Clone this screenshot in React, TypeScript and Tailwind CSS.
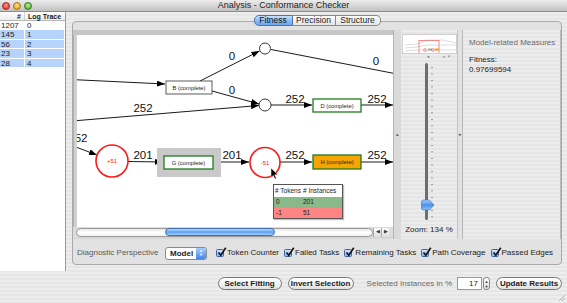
import React from 'react';

const traces = [
  { count: '1207', id: '0', selected: false },
  { count: '145', id: '1', selected: true },
  { count: '56', id: '2', selected: true },
  { count: '23', id: '3', selected: true },
  { count: '28', id: '4', selected: true },
];

const checks = ['Token Counter', 'Failed Tasks', 'Remaining Tasks', 'Path Coverage', 'Passed Edges'];

function TitleBar() {
  return (
    <div className="h-[12px] flex items-center border-b border-[#8c8c8c] bg-gradient-to-b from-[#ececec] to-[#c2c2c2]">
      <div className="w-[40px] flex items-center gap-[3px] pl-[2px]">
        <span className="w-[8px] h-[8px] rounded-full bg-[radial-gradient(circle_at_50%_35%,#ff9a8a,#d0241a)] border border-[#a2281e]" />
        <span className="w-[8px] h-[8px] rounded-full bg-[radial-gradient(circle_at_50%_35%,#ffe08a,#e09a10)] border border-[#a8740e]" />
        <span className="w-[8px] h-[8px] rounded-full bg-[radial-gradient(circle_at_50%_35%,#bff08a,#3ea324)] border border-[#2f7a1c]" />
      </div>
      <div className="flex-1 text-center text-[9px] leading-none text-[#222]">Analysis - Conformance Checker</div>
      <div className="w-[40px]" />
    </div>
  );
}

function TracesTable() {
  return (
    <div className="w-[66px] bg-white border-r border-[#9a9a9a] flex flex-col">
      <div className="h-[9px] flex border-b border-[#b8b8b8] bg-gradient-to-b from-white to-[#ececec] text-[7px] font-bold leading-[9px]">
        <div className="w-[25px] text-right pr-[3px] border-r border-[#cfcfcf]">#</div>
        <div className="flex-1 pl-[3px]">Log Trace</div>
      </div>
      {traces.map((t) => (
        <div
          key={t.id}
          className={`h-[9.4px] flex w-[64px] leading-[9px] text-[8px] border-b border-white ${t.selected ? 'bg-[#b5d3fb]' : ''}`}
        >
          <div className="w-[25px] pl-[1px] border-r border-white">{t.count}</div>
          <div className="flex-1 pl-[2px]">{t.id}</div>
        </div>
      ))}
    </div>
  );
}

function Tabs() {
  return (
    <div className="relative z-10 flex justify-center">
      <div className="flex h-[11px] text-[8.5px] leading-[9px]">
        <div className="w-[39px] text-center rounded-l-[5px] border border-[#4d76b0] bg-gradient-to-b from-[#c9e0fb] via-[#8fbdf2] to-[#6aa5ee] text-[#111]">Fitness</div>
        <div className="w-[43px] text-center border-y border-r border-[#8a8a8a] bg-gradient-to-b from-white to-[#e4e4e4]">Precision</div>
        <div className="w-[45px] text-center rounded-r-[5px] border-y border-r border-[#8a8a8a] bg-gradient-to-b from-white to-[#e4e4e4]">Structure</div>
      </div>
    </div>
  );
}

function ProcessGraph() {
  const label = { fontSize: 11.5, fontFamily: 'Liberation Sans, Arial, sans-serif' };
  const small = { fontSize: 5.8, fontFamily: 'Liberation Sans, Arial, sans-serif' };
  return (
    <svg width={316} height={192} viewBox="77 35 316 192" className="block">
      <defs>
        <marker id="ah" viewBox="0 0 8 6" refX="8" refY="3" markerWidth="8" markerHeight="6" markerUnits="userSpaceOnUse" orient="auto">
          <path d="M0,0 L8,3 L0,6 z" fill="#000" />
        </marker>
      </defs>
      <g stroke="#1a1a1a" strokeWidth={1} fill="none">
        <path d="M60,79 L165,84" markerEnd="url(#ah)" />
        <path d="M200,81 L259.5,51" markerEnd="url(#ah)" />
        <path d="M212,91 L259,104" markerEnd="url(#ah)" />
        <path d="M60,122 L259,105.5" markerEnd="url(#ah)" />
        <path d="M271,49.5 L397,74" />
        <path d="M271,105 L312,105" markerEnd="url(#ah)" />
        <path d="M361,105 L393,105" markerEnd="url(#ah)" />
        <path d="M60,141 L97,155" markerEnd="url(#ah)" />
        <path d="M128,161.5 L163,162" markerEnd="url(#ah)" />
        <path d="M213,162 L249,162" markerEnd="url(#ah)" />
        <path d="M280,162 L312,162" markerEnd="url(#ah)" />
        <path d="M361,162 L393,162" markerEnd="url(#ah)" />
      </g>
      <g fill="#111" style={label}>
        <text x={73.5} y={79} textAnchor="middle">0</text>
        <text x={232} y={60} textAnchor="middle">0</text>
        <text x={232} y={94} textAnchor="middle">0</text>
        <text x={143} y={112} textAnchor="middle">252</text>
        <text x={376} y={65} textAnchor="middle">0</text>
        <text x={295} y={103} textAnchor="middle">252</text>
        <text x={377} y={103} textAnchor="middle">252</text>
        <text x={87.5} y={141.5} textAnchor="end">252</text>
        <text x={143} y={159} textAnchor="middle">201</text>
        <text x={232} y={159} textAnchor="middle">201</text>
        <text x={295} y={159} textAnchor="middle">252</text>
        <text x={377} y={159} textAnchor="middle">252</text>
      </g>
      <rect x={157} y={148} width={64} height={29} fill="#c9c9c9" />
      <rect x={166} y={81} width={46} height={13} fill="#fff" stroke="#333" strokeWidth={0.8} />
      <text x={189} y={89.5} textAnchor="middle" fill="#222" style={small}>B (complete)</text>
      <rect x={313} y={99} width={48} height={13} fill="#fff" stroke="#1f7a1f" strokeWidth={1.3} />
      <text x={337} y={107.5} textAnchor="middle" fill="#222" style={small}>D (complete)</text>
      <rect x={164} y={156} width={49} height={13} fill="#fff" stroke="#1f7a1f" strokeWidth={1.3} />
      <text x={188.5} y={164.5} textAnchor="middle" fill="#222" style={small}>G (complete)</text>
      <rect x={313} y={155} width={48} height={14} fill="#f5a400" stroke="#1f7a1f" strokeWidth={1.3} />
      <text x={337} y={164} textAnchor="middle" fill="#222" style={small}>H (complete)</text>
      <circle cx={265} cy={48.5} r={5.5} fill="#fff" stroke="#222" strokeWidth={0.9} />
      <circle cx={265} cy={105} r={6} fill="#fff" stroke="#222" strokeWidth={0.9} />
      <circle cx={112} cy={161} r={16} fill="#fff" stroke="#ff1a1a" strokeWidth={1.6} />
      <text x={112} y={163} textAnchor="middle" fill="#ff1a1a" style={small}>+51</text>
      <circle cx={265} cy={162.5} r={15} fill="#fff" stroke="#ff1a1a" strokeWidth={1.6} />
      <text x={265} y={164.5} textAnchor="middle" fill="#ff1a1a" style={small}>-51</text>
      <path d="M271,168 l0,9.5 l2.3,-2.1 l1.7,3.6 l1.4,-0.7 l-1.7,-3.5 l3.2,0 z" fill="#000" stroke="#fff" strokeWidth={0.5} />
    </svg>
  );
}

function TokenTable() {
  return (
    <div className="absolute left-[196px] top-[149px] w-[70px] border border-[#555] text-[6.5px] leading-none bg-white shadow-[1px_1px_1px_rgba(0,0,0,0.25)]">
      <div className="h-[12px] flex items-center">
        <div className="w-[29px] pl-[1px]"># Tokens</div>
        <div className="flex-1"># Instances</div>
      </div>
      <div className="h-[10.5px] flex items-center bg-[#89b889]">
        <div className="w-[29px] pl-[2px]">0</div>
        <div className="flex-1">201</div>
      </div>
      <div className="h-[10.5px] flex items-center bg-[#ff8585]">
        <div className="w-[29px] pl-[2px]">-1</div>
        <div className="flex-1">51</div>
      </div>
    </div>
  );
}

function HScrollBar() {
  return (
    <div className="h-[10px] flex items-center bg-[#dcdcdc] pl-[3px]">
      <div className="w-[297px] h-[9px] rounded-full border border-[#9a9a9a] bg-gradient-to-b from-[#e8e8e8] via-white to-[#f2f2f2] flex items-center pl-[88px]">
        <div className="w-[110px] h-[8px] rounded-full border border-[#3f6fb0] bg-gradient-to-b from-[#b8dcff] via-[#5ea0f0] to-[#9fd0ff]" />
      </div>
      <div className="w-[8px] h-[9px] flex items-center justify-center text-[5px] text-[#333] border-l border-[#aaa] bg-gradient-to-b from-white to-[#ddd]">◀</div>
      <div className="w-[8px] h-[9px] flex items-center justify-center text-[5px] text-[#333] border-l border-[#aaa] bg-gradient-to-b from-white to-[#ddd]">▶</div>
    </div>
  );
}

function ZoomPanel() {
  const ticks = Array.from({ length: 24 }, (_, i) => 13 + i * 6.5);
  return (
    <div className="w-[57px] flex flex-col pt-[4px] px-[1px] bg-[repeating-linear-gradient(180deg,#ececec_0px,#ececec_2px,#e5e5e5_2px,#e5e5e5_4px)] border-r border-[#c4c4c4]">
      <svg width={55} height={20} className="block bg-white border border-[#cfcfcf]">
        <g stroke="#b9b9b9" strokeWidth={0.5} fill="none">
          <path d="M2,10 L14,9 L24,5 L40,5 L53,8" />
          <path d="M2,13 L14,12 L24,10 L40,10 L53,10" />
          <path d="M2,16 L14,15 L24,15 L40,15 L53,15" />
        </g>
        <rect x={25} y={13.5} width={4} height={2} fill="#aaa" />
        <rect x={32} y={13.5} width={4} height={2} fill="#f5a400" />
        <circle cx={22} cy={15} r={1.4} fill="none" stroke="#f33" strokeWidth={0.5} />
        <circle cx={30} cy={15} r={1.4} fill="none" stroke="#f33" strokeWidth={0.5} />
        <rect x={16} y={5.5} width={20} height={13} fill="none" stroke="#f27070" strokeWidth={0.8} />
      </svg>
      <svg width={55} height={170} className="block">
        <path d="M26.5,1.5 l-1.5,2 h3 z" fill="#777" />
        <path d="M42,1.5 l-1.5,2 h3 z M47,3.5 l-1.5,-2 h3 z" fill="#999" />
        <rect x={23} y={9} width={3} height={157} rx={1.5} fill="#6e6e6e" />
        {ticks.map((y) => (
          <rect key={y} x={29} y={y} width={2} height={0.8} fill="#8a8a8a" />
        ))}
        <defs>
          <linearGradient id="thumb" x1="0" y1="0" x2="0" y2="1">
            <stop offset="0" stopColor="#a9d3ff" />
            <stop offset="0.5" stopColor="#4b8fe6" />
            <stop offset="1" stopColor="#8cc2ff" />
          </linearGradient>
        </defs>
        <path d="M21.5,146 h6 l4.5,5 l-4.5,5 h-6 a2,2 0 0 1 -2,-2 v-6 a2,2 0 0 1 2,-2 z" fill="url(#thumb)" stroke="#3a6cb0" strokeWidth={0.6} />
      </svg>
      <div className="text-center text-[8px] leading-[10px] mt-[1px]">Zoom: 134 %</div>
    </div>
  );
}

function MeasuresPanel() {
  return (
    <div className="w-[99px] pt-[8px] pl-[6px] border-x border-[#b8b8b8] bg-[repeating-linear-gradient(180deg,#ececec_0px,#ececec_2px,#e5e5e5_2px,#e5e5e5_4px)] text-[8px] leading-[10px]">
      <div className="text-[#6a6a6a]">Model-related Measures</div>
      <div className="mt-[7px] text-[#222]">Fitness:</div>
      <div className="text-[#222]">0.97699594</div>
    </div>
  );
}

function CheckBox() {
  return (
    <span className="w-[8px] h-[8px] rounded-[1.5px] border border-[#3f64a0] bg-gradient-to-b from-[#d4e6ff] to-[#7fb0ef] relative inline-block">
      <svg width={10} height={10} viewBox="0 0 10 10" className="absolute -top-[3px] left-0">
        <path d="M1.5,5.5 L3.8,8.2 L8.8,0.8" stroke="#111" strokeWidth={1.6} fill="none" />
      </svg>
    </span>
  );
}

function DiagnosticRow() {
  return (
    <div className="mt-[3px] h-[22px] flex items-center pl-[4px] text-[8px]">
      <span className="text-[#5a5a5a] w-[88px]">Diagnostic Perspective</span>
      <div className="w-[42px] h-[13px] flex rounded-[3px] border border-[#8a8a8a] bg-white overflow-hidden">
        <span className="flex-1 pl-[4px] font-bold leading-[11px]">Model</span>
        <span className="w-[10px] flex flex-col items-center justify-center bg-gradient-to-b from-[#a5cdfb] to-[#3f86e6] text-white text-[4px] leading-[4px]">
          <span>▲</span>
          <span>▼</span>
        </span>
      </div>
      <div className="flex items-center gap-[5px] ml-[9px]">
        {checks.map((c) => (
          <div key={c} className="flex items-center gap-[3px]">
            <CheckBox />
            <span className="text-[#1c1c1c]">{c}</span>
          </div>
        ))}
      </div>
    </div>
  );
}

function PillButton({ children, width }: { children: React.ReactNode; width: string }) {
  return (
    <div className={`${width} h-[13px] rounded-full border border-[#777] bg-gradient-to-b from-white via-[#f4f4f4] to-[#dedede] text-center text-[8px] font-bold leading-[11px] text-[#1a1a1a]`}>
      {children}
    </div>
  );
}

function BottomBar() {
  return (
    <div className="flex-1 flex justify-end items-start pt-[6px] pr-[5px] relative">
      <PillButton width="w-[64px]">Select Fitting</PillButton>
      <div className="w-[6px]" />
      <PillButton width="w-[66px]">Invert Selection</PillButton>
      <span className="ml-[13px] text-[8px] leading-[13px] text-[#6a6a6a]">Selected Instances in %</span>
      <div className="ml-[5px] w-[25px] h-[13px] bg-white border border-[#9a9a9a] text-right pr-[3px] text-[8px] leading-[11px]">17</div>
      <div className="ml-[1px] w-[7px] h-[13px] rounded-[3px] border border-[#888] bg-gradient-to-b from-white to-[#ddd] flex flex-col items-center justify-center text-[4px] leading-[5px] text-[#333]">
        <span>▲</span>
        <span>▼</span>
      </div>
      <div className="w-[6px]" />
      <PillButton width="w-[66px]">Update Results</PillButton>
      <svg width={8} height={8} className="absolute right-[1px] bottom-[1px]">
        <path d="M7,1 L1,7 M7,4 L4,7" stroke="#999" strokeWidth={0.7} />
      </svg>
    </div>
  );
}

export default function App() {
  return (
    <div className="w-[567px] h-[303px] overflow-hidden flex flex-col bg-[repeating-linear-gradient(180deg,#ededed_0px,#ededed_2px,#e6e6e6_2px,#e6e6e6_4px)] font-['Liberation_Sans',Arial,sans-serif] text-[8px] text-[#1c1c1c]">
      <TitleBar />
      <div className="flex h-[259px]">
        <TracesTable />
        <div className="flex-1 flex flex-col pt-[3px] pl-[6px] pr-[5px]">
          <Tabs />
          <div className="-mt-[5px] h-[244px] rounded-[4px] border border-[#a9a9a9] bg-[#e2e2e2] flex flex-col pt-[8px]">
            <div className="flex h-[209px]">
              {/* graph canvas */}
              <div className="w-[320px] flex flex-col border-t-[5px] border-[#c6c6c6] bg-[#d6d6d6]">
                <div className="flex">
                  <div className="w-[4px] bg-[#d0d0d0] border-l border-[#b0b0b0]" />
                  <div className="relative bg-white">
                    <ProcessGraph />
                    <TokenTable />
                  </div>
                </div>
                <HScrollBar />
              </div>
              <div className="w-[8px] bg-[#dadada] border-l border-[#b4b4b4] flex flex-col items-center justify-center text-[5px] text-[#555]">▴</div>
              <ZoomPanel />
              <div className="w-[4px] flex items-center justify-center text-[5px] text-[#555]">▸</div>
              <MeasuresPanel />
            </div>
            <DiagnosticRow />
          </div>
        </div>
      </div>
      <BottomBar />
    </div>
  );
}
